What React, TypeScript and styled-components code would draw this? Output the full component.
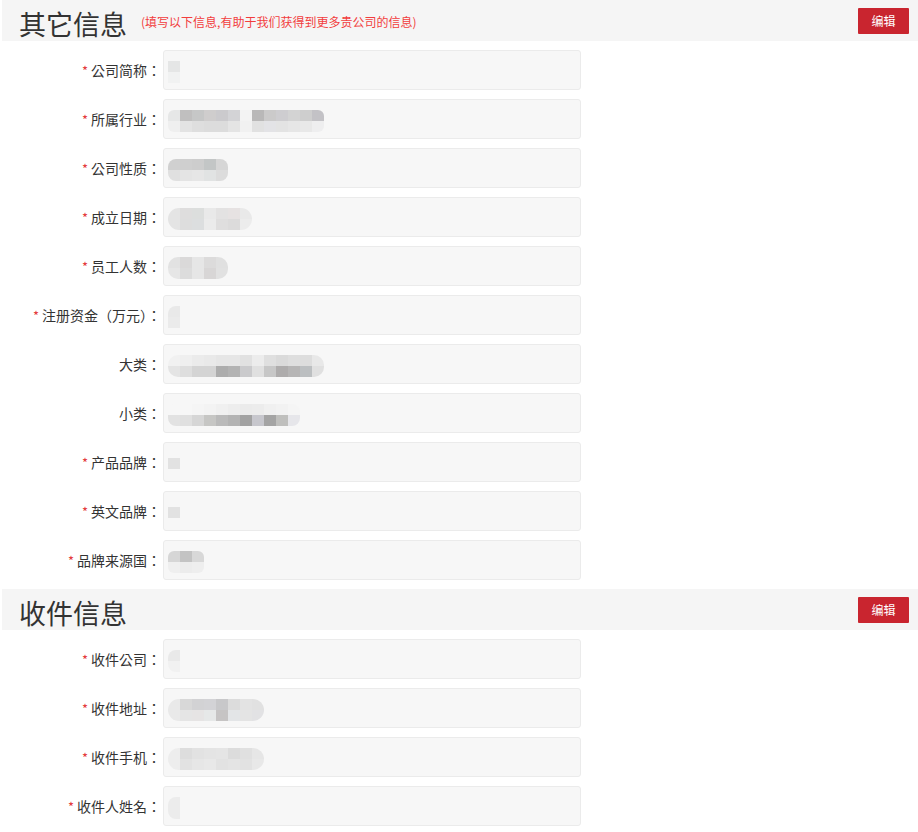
import React from 'react'
import styled, { createGlobalStyle } from 'styled-components'

type Cell = [string, string?]

interface Field {
  label: string
  required: boolean
  cells: Cell[]
  round?: string
}

const otherFields: Field[] = [
  { label: '公司简称', required: true, cells: [['#e5e6e6', '#f1f2f2']] },
  {
    label: '所属行业',
    required: true,
    round: '6px',
    cells: [
      ['#e6e7e7', '#efefef'], ['#c0bfbf', '#e3e3e3'], ['#c6c7c7', '#dedede'], ['#cfcdcd', '#dcdcdc'],
      ['#cbcacd', '#dcdcdc'], ['#d3d3d6', '#e4e4e4'], ['#f3f3f3', '#f1f1f1'], ['#b9b8b8', '#e1e1e1'],
      ['#cbcaca', '#e3e3e6'], ['#cecdd0', '#e3e3e3'], ['#d3d3d3', '#e6e6e6'], ['#cecece', '#e8e8e8'],
      ['#c3c2c6', '#eeeeef'],
    ],
  },
  {
    label: '公司性质',
    required: true,
    round: '8px',
    cells: [['#d0d0d0', '#e0e0e0'], ['#cfcfcf', '#e4e4e4'], ['#cdcdcd', '#e6e6e6'], ['#c3c6c6', '#e1e3e3'], ['#d6d6d6', '#dcdcdc']],
  },
  {
    label: '成立日期',
    required: true,
    round: '12px',
    cells: [
      ['#e4e4e4', '#e4e4e4'], ['#dedddd', '#dddddd'], ['#dcdedd', '#dcdedf'], ['#e9e9e9', '#ebebeb'],
      ['#e3e2e2', '#dfdede'], ['#e6e2e2', '#dcdbdb'], ['#e9e9e9', '#ececec'],
    ],
  },
  {
    label: '员工人数',
    required: true,
    round: '10px',
    cells: [['#e2e2e2', '#e6e6e6'], ['#dad9d9', '#dcdcdc'], ['#e6e6e6', '#e6e6e6'], ['#dcdbdb', '#d8d6d6'], ['#e0e0e0', '#e1e1e1']],
  },
  { label: '注册资金（万元）', required: true, round: '8px 0 0 0', cells: [['#e9e9e9', '#ebebeb']] },
  {
    label: '大类',
    required: false,
    round: '10px',
    cells: [
      ['#f1f1f1', '#e4e4e4'], ['#efefef', '#dedede'], ['#ebebeb', '#d4d4d4'], ['#e9e9e9', '#d4d4d4'],
      ['#e6e6e6', '#adadad'], ['#e6e6e6', '#b3b3b3'], ['#e1e1e1', '#cacacc'], ['#ececec', '#e0e0e0'],
      ['#dfdfdf', '#c7c7c7'], ['#dadada', '#aeacac'], ['#dedede', '#b6b5b5'], ['#dddddd', '#bcbfc1'],
      ['#e8e8e8', '#e0e0e0'],
    ],
  },
  {
    label: '小类',
    required: false,
    round: '8px',
    cells: [
      ['#f7f7f7', '#e2e2e2'], ['#f7f7f7', '#e0e0e0'], ['#f5f5f5', '#d6d6d6'], ['#f3f3f3', '#c6c6c4'],
      ['#f0f0f0', '#bababa'], ['#ededed', '#b3b3b3'], ['#ebebeb', '#a2a2a2'], ['#ececec', '#c7c7cd'],
      ['#f0f0f0', '#a4a4a4'], ['#f2f2f2', '#bfbfbd'], ['#f5f5f5', '#e6e6ea'],
    ],
  },
  { label: '产品品牌', required: true, cells: [['#e2e2e2']] },
  { label: '英文品牌', required: true, cells: [['#e2e2e2']] },
  {
    label: '品牌来源国',
    required: true,
    round: '6px',
    cells: [['#d6d6d6', '#efefef'], ['#c3c3c3', '#ececec'], ['#d8d8d8', '#eeeeee']],
  },
]

const shipFields: Field[] = [
  { label: '收件公司', required: true, round: '8px 0 0 8px', cells: [['#e9e9e9', '#f1f1f1']] },
  {
    label: '收件地址',
    required: true,
    round: '12px',
    cells: [
      ['#e9e9e9', '#e9e9e9'], ['#d8d8d8', '#e5e5e5'], ['#d2d2d4', '#e6e4e4'], ['#d3d3d6', '#e6e8e8'],
      ['#c8c8ca', '#c6c4c4'], ['#dcdcdc', '#e3e5e7'], ['#e3e3e3', '#e4e4e4'], ['#e1e1e1', '#e2e2e4'],
    ],
  },
  {
    label: '收件手机',
    required: true,
    round: '12px',
    cells: [
      ['#ededed', '#ededed'], ['#dddddd', '#e2e2e2'], ['#e2e2e2', '#e6e6e6'], ['#e4e4e4', '#e8e8e8'],
      ['#e5e5e5', '#e2e2e2'], ['#dcdcdc', '#e4e4e4'], ['#e0e0e0', '#e2e2e2'], ['#e6e6e6', '#e8e8e8'],
    ],
  },
  { label: '收件人姓名', required: true, round: '8px 0 0 8px', cells: [['#ececec', '#ececec']] },
]

const App = () => {
  const renderRows = (fields: Field[]) =>
    fields.map((f) => (
      <Row key={f.label}>
        <Label>
          {f.required ? <Star>*</Star> : null}
          {f.label}
          <Colon>：</Colon>
        </Label>
        <Input>
          <Mosaic $round={f.round || '0'}>
            {f.cells.map((c, i) => (
              <Column key={i}>
                <Block $bg={c[0]} />
                {c[1] ? <Block $bg={c[1]} /> : null}
              </Column>
            ))}
          </Mosaic>
        </Input>
      </Row>
    ))

  return (
    <>
      <GlobalStyle />
      <Page>
        <Section>
          <Head>
            <Title>其它信息</Title>
            <Tip>(填写以下信息,有助于我们获得到更多贵公司的信息)</Tip>
            <EditBtn>编辑</EditBtn>
          </Head>
          {renderRows(otherFields)}
        </Section>
        <Section>
          <Head>
            <Title>收件信息</Title>
            <EditBtn>编辑</EditBtn>
          </Head>
          {renderRows(shipFields)}
        </Section>
      </Page>
    </>
  )
}

export default App

const GlobalStyle = createGlobalStyle`
  body {
    margin: 0;
    background: #fff;
    font-family: "Noto Sans CJK SC", "Noto Sans", sans-serif;
    color: #333;
  }
`

const Page = styled.div`
  width: 918px;
  padding-left: 2px;
  box-sizing: border-box;
`

const Section = styled.div`
  display: flex;
  flex-direction: column;
`

const Head = styled.div`
  height: 41px;
  background-color: #f5f5f5;
  display: flex;
  align-items: center;
  padding: 0 9px 0 17px;
  margin-bottom: 9px;
`

const Title = styled.h2`
  margin: 6px 0 0;
  font-size: 27px;
  font-weight: 400;
  line-height: 30px;
  color: #333;
`

const Tip = styled.span`
  margin-left: 14px;
  font-size: 12px;
  color: #f23d3d;
  line-height: 16px;
  margin-top: 2px;
`

const EditBtn = styled.button`
  margin-left: auto;
  width: 51px;
  height: 26px;
  border: none;
  border-radius: 1px;
  background-color: #c9252f;
  color: #fff;
  font-family: inherit;
  font-size: 12px;
  padding: 0;
  cursor: pointer;
`

const Row = styled.div`
  display: flex;
  align-items: center;
  margin-bottom: 9px;
`

const Label = styled.label`
  width: 159px;
  text-align: right;
  font-size: 14px;
  color: #333;
  white-space: nowrap;
  font-family: "Noto Sans CJK TC", "Noto Sans CJK SC", sans-serif;
`

const Colon = styled.span`
  font-family: "Noto Sans CJK TC", sans-serif;
`

const Star = styled.span`
  color: #e4393c;
  font-size: 13px;
  margin-right: 3px;
`

const Input = styled.div`
  margin-left: 2px;
  width: 418px;
  height: 40px;
  box-sizing: border-box;
  border: 1px solid #ebebeb;
  border-radius: 3px;
  background-color: #f7f7f7;
  display: flex;
  align-items: center;
  padding-left: 4px;
`

const Mosaic = styled.div<{ $round: string }>`
  display: flex;
  margin-top: 3px;
  border-radius: ${(p) => p.$round};
  overflow: hidden;
`

const Column = styled.div`
  display: flex;
  flex-direction: column;
  align-self: flex-start;
`

const Block = styled.div<{ $bg: string }>`
  width: 12px;
  height: 11px;
  background-color: ${(p) => p.$bg};
`
